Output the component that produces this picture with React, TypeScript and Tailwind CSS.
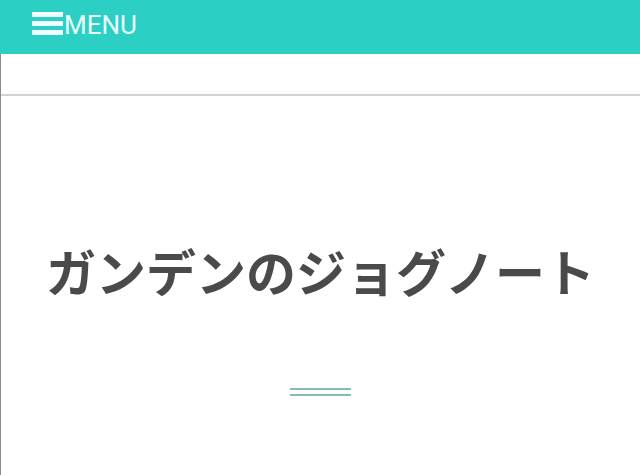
import React from "react";

export default function App() {
  return (
    <div className="w-[640px] h-[475px] bg-white overflow-hidden flex flex-col">
      <header className="h-[54px] bg-[#2bcfc4] flex items-start pl-[32px] shrink-0">
        <div className="flex flex-col gap-[4px] w-[31px] mt-[12px]">
          <span className="block h-[5px] bg-[#f0fffd]" />
          <span className="block h-[5px] bg-[#f0fffd]" />
          <span className="block h-[5px] bg-[#f0fffd]" />
        </div>
        <span
          className="text-[26px] leading-none text-[#eafffc] ml-[1px] mt-[12px]"
          style={{ fontFamily: "Roboto, 'Open Sans', sans-serif" }}
        >
          MENU
        </span>
      </header>
      <div className="flex-1 flex flex-col border-l border-[#8a8a8a]">
        <div className="h-[42px] border-b-2 border-[#d2d2d2] shrink-0" />
        <div className="flex flex-col items-center">
          <h1
            className="mt-[144px] text-[50px] leading-[60px] font-bold text-[#4a4a4a] whitespace-nowrap"
            style={{ fontFamily: "'Noto Sans CJK JP', 'Noto Sans', sans-serif" }}
          >
            ガンデンのジョグノート
          </h1>
          <div className="mt-[88px] flex flex-col gap-[4px] w-[61px]">
            <span className="block h-[2px] bg-[#86bdb9]" />
            <span className="block h-[2px] bg-[#86bdb9]" />
          </div>
        </div>
      </div>
    </div>
  );
}
